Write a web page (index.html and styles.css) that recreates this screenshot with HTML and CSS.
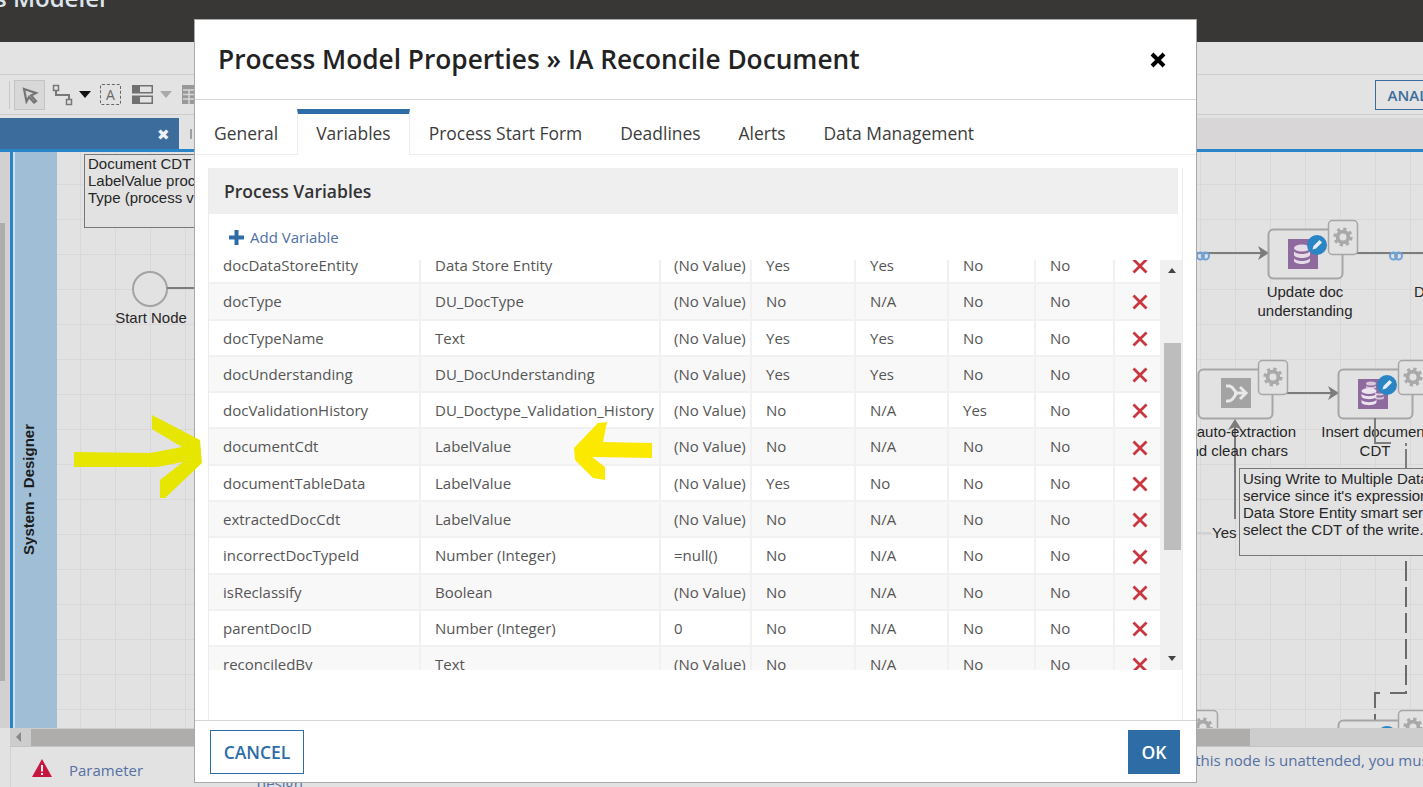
FILE: index.html
```html
<!DOCTYPE html>
<html lang="en">
<head>
    <meta charset="UTF-8">
    <title>Process Modeler</title>
    <link rel="stylesheet" href="styles.css">
</head>
<body>
    <svg class="defs" width="0" height="0">
        <symbol id="gear" viewBox="0 0 24 24">
            <circle cx="12" cy="12" r="6.5" fill="none" stroke="#a9a9a9" stroke-width="4.5"/>
            <circle cx="12" cy="12" r="9.8" fill="none" stroke="#a9a9a9" stroke-width="3.4" stroke-dasharray="3.9 3.8"/>
        </symbol>
        <symbol id="dbicon" viewBox="0 0 30 30">
            <rect width="30" height="30" fill="#8f6a9f"/>
            <ellipse cx="14" cy="9" rx="8" ry="3.5" fill="#e6dce8"/>
            <path d="M6 12c1 4 15 4 16 0v4c-1 4-15 4-16 0z" fill="#e6dce8"/>
            <path d="M6 19c1 4 15 4 16 0v3c-1 4-15 4-16 0z" fill="#e6dce8"/>
        </symbol>
        <symbol id="dbmulti" viewBox="0 0 30 30">
            <rect width="30" height="30" fill="#8f6a9f"/>
            <ellipse cx="13" cy="4.500" rx="5" ry="2" fill="#d8c8dc"/>
            <path d="M8 6.500c1 2 9 2 10 0v2c-1 2-9 2-10 0z" fill="#d8c8dc"/>
            <path d="M17 13c1 2 8 2 9 0v2c-1 2-8 2-9 0zM17 17c1 2 8 2 9 0v2c-1 2-8 2-9 0z" fill="#d8c8dc"/>
            <ellipse cx="11" cy="12" rx="7.500" ry="3" fill="#ece4ee"/>
            <path d="M3.500 14.500c1 3.500 14 3.500 15 0v3c-1 3.500-14 3.500-15 0z" fill="#ece4ee"/>
            <path d="M3.500 20.500c1 3.500 14 3.500 15 0v3c-1 3.500-14 3.500-15 0z" fill="#ece4ee"/>
        </symbol>
        <symbol id="pencil" viewBox="0 0 20 20">
            <circle cx="10" cy="10" r="10" fill="#2a85c4"/>
            <path d="M5.5 14.5l1-3.5 6-6 2.500 2.500-6 6z" fill="#e8eef3"/>
        </symbol>
        <symbol id="chain" viewBox="0 0 14 10">
            <rect x="1" y="1.500" width="7" height="7" rx="3.500" fill="none" stroke="#6fa3d6" stroke-width="2"/>
            <rect x="6" y="1.500" width="7" height="7" rx="3.500" fill="none" stroke="#6fa3d6" stroke-width="2"/>
        </symbol>
        <symbol id="remove" viewBox="0 0 16 16">
            <path d="M1.500 1.500l13 13M14.500 1.500l-13 13" fill="none" stroke="#c9363e" stroke-width="2.800"/>
        </symbol>
    </svg>

    <div class="app">
        <div class="topbar"><span class="apptitle">s Modeler</span></div>
        <div class="band"></div>
        <div class="toolbar">
            <span class="toolsep"></span>
            <span class="toolbtn">
                <svg width="18" height="18" viewBox="0 0 18 18"><path d="M3 3l12 4-5 2.500 5 5.500-2 1.500-5-5.500-2.500 4.500z" fill="#d8d8d8" stroke="#757575" stroke-width="2.200"/></svg>
            </span>
            <svg class="tool-connector" width="22" height="22" viewBox="0 0 22 22"><path d="M4 5v6h13v6" fill="none" stroke="#777" stroke-width="2"/><rect x="1.500" y="1.500" width="5" height="5" fill="#e3e3e3" stroke="#777" stroke-width="1.500"/><rect x="14.500" y="15.500" width="5" height="5" fill="#e3e3e3" stroke="#777" stroke-width="1.500"/></svg>
            <span class="caret dark"></span>
            <span class="tool-text">A</span>
            <svg class="tool-layout" width="21" height="19" viewBox="0 0 21 19"><rect width="21" height="8.500" fill="#707070"/><rect y="10.500" width="21" height="8.500" fill="#707070"/><rect x="8" y="1.500" width="11.500" height="5.500" fill="#e3e3e3"/><rect x="8" y="12" width="11.500" height="5.500" fill="#e3e3e3"/></svg>
            <span class="caret"></span>
            <svg class="tool-table" width="20" height="19" viewBox="0 0 20 19"><rect width="20" height="19" fill="#999"/><path d="M1 5h18M1 9.500h18M1 14h18M7 5v14" stroke="#d8d8d8" stroke-width="1.500"/></svg>
            <span class="toolaction">ANALYTICS</span>
        </div>
        <div class="tabstrip">
            <div class="doctab"><span class="doctab-close">&#10006;</span></div>
            <span class="doctab-next">I</span>
            <div class="tabstrip-fill"></div>
        </div>
        <div class="workspace">
            <div class="gutter"><div class="gutter-thumb"></div></div>
            <div class="lane"><span class="lane-label">System - Designer</span></div>
            <div class="grid">
                <svg class="diagram" width="1366" height="576" viewBox="57 151 1366 576">
                    <rect class="note" x="84.500" y="153.500" width="200" height="73"/>
                    <text class="lbl" x="88" y="169">Document CDT</text>
                    <text class="lbl" x="88" y="186">LabelValue process</text>
                    <text class="lbl" x="88" y="203">Type (process var)</text>

                    <circle class="startnode" cx="150" cy="288" r="17"/>
                    <path class="flow" d="M167 287h40"/>
                    <text class="lbl mid" x="151" y="323">Start Node</text>

                    <path class="flow" d="M1197 252h64M1357 252h66"/>
                    <path class="head" d="M1258 245l11 7-11 7 3-7z"/>
                    <use href="#chain" x="1196" y="250" width="14" height="10"/>
                    <use href="#chain" x="1389" y="250" width="14" height="10"/>
                    <rect class="node" x="1268.500" y="228.500" width="74" height="49" rx="5"/>
                    <use href="#dbicon" x="1288" y="238" width="30" height="30"/>
                    <use href="#pencil" x="1307" y="234" width="20" height="20"/>
                    <rect class="gearbox" x="1328.500" y="219.500" width="29" height="34" rx="4"/>
                    <use href="#gear" x="1333" y="226" width="20" height="20"/>
                    <text class="lbl mid" x="1305" y="297">Update doc</text>
                    <text class="lbl mid" x="1305" y="316">understanding</text>
                    <text class="lbl" x="1414" y="297">D</text>

                    <path class="flow" d="M1287 392h46"/>
                    <path class="head" d="M1328 385l11 7-11 7 3-7z"/>
                    <rect class="node" x="1198.500" y="368.500" width="74" height="49" rx="5"/>
                    <rect x="1221" y="377" width="30" height="30" fill="#a3a3a3"/>
                    <path d="M1226 385h3c4 0 5 5 8 7M1226 400h3c4 0 5-5 8-8M1234 392h11M1240 386l6 6-6 6" fill="none" stroke="#e8e8e8" stroke-width="3"/>
                    <rect class="gearbox" x="1258.500" y="359.500" width="29" height="34" rx="4"/>
                    <use href="#gear" x="1263" y="366" width="20" height="20"/>
                    <rect class="node" x="1338.500" y="368.500" width="74" height="49" rx="5"/>
                    <use href="#dbmulti" x="1358" y="378" width="30" height="30"/>
                    <use href="#pencil" x="1377" y="374" width="20" height="20"/>
                    <rect class="gearbox" x="1398.500" y="359.500" width="29" height="34" rx="4"/>
                    <use href="#gear" x="1403" y="366" width="20" height="20"/>

                    <path class="flow" d="M1235 518v-94"/>
                    <path class="head" d="M1228 429l7-11 7 11-7-3z"/>
                    <text class="lbl end" x="1296" y="437">Run auto-extraction</text>
                    <text class="lbl end" x="1288" y="456">and clean chars</text>
                    <text class="lbl mid" x="1375" y="437">Insert document</text>
                    <text class="lbl mid" x="1375" y="456">CDT</text>

                    <path class="flow thin" d="M1375 417v25h16M1406 445v-3M1406 448v22"/>
                    <path class="dash" d="M1406 560v132h-16M1380 692h-5v27"/>
                    <path class="gridline" d="M1197 532h14"/>
                    <text class="lbl" x="1212" y="538">Yes</text>
                    <rect class="note" x="1239.500" y="467.500" width="200" height="87"/>
                    <text class="lbl" x="1243" y="484">Using Write to Multiple Data Store</text>
                    <text class="lbl" x="1243" y="501">service since it's expression-able.</text>
                    <text class="lbl" x="1243" y="518">Data Store Entity smart service to</text>
                    <text class="lbl" x="1243" y="535">select the CDT of the write.</text>

                    <rect class="gearbox" x="1188.500" y="709.500" width="29" height="34" rx="4"/>
                    <use href="#gear" x="1193" y="716" width="20" height="20"/>
                    <rect class="node" x="1338.500" y="719.500" width="74" height="49" rx="5"/>
                    <circle cx="1387" cy="735" r="10" fill="#2a85c4"/>
                    <rect class="gearbox" x="1398.500" y="709.500" width="29" height="34" rx="4"/>
                    <use href="#gear" x="1403" y="716" width="20" height="20"/>
                </svg>
            </div>
        </div>
        <div class="hscroll">
            <span class="hscroll-btn"></span>
            <div class="hscroll-thumb"></div>
        </div>
        <div class="messages">
            <svg class="warn" width="20" height="18" viewBox="0 0 20 18"><path d="M10 0l10 18H0z" fill="#c8173f"/><path d="M9 6h2v6.500H9zM9 14h2v2H9z" fill="#f3f3f3"/></svg>
            <span class="msg-name">Parameter</span>
            <span class="msg-text">If this node is unattended, you must</span>
            <span class="msg-more">design.</span>
        </div>
    </div>

    <div class="modal">
        <div class="modal-head">
            <h2>Process Model Properties &raquo; IA Reconcile Document</h2>
            <svg class="modal-close" width="16" height="16" viewBox="0 0 16 16"><path d="M2 2l12 12M14 2L2 14" stroke="#000" stroke-width="4"/></svg>
        </div>
        <div class="tabs">
            <span class="tab">General</span>
            <span class="tab active">Variables</span>
            <span class="tab">Process Start Form</span>
            <span class="tab">Deadlines</span>
            <span class="tab">Alerts</span>
            <span class="tab">Data Management</span>
        </div>
        <div class="modal-body">
            <div class="panel">
                <div class="panel-title">Process Variables</div>
                <div class="addvar">
                    <svg width="15" height="15" viewBox="0 0 15 15"><path d="M5.500 0h4v5.500H15v4H9.500V15h-4V9.500H0v-4h5.500z" fill="#2e6ca6"/></svg>
                    <span>Add Variable</span>
                </div>
                <div class="vars">
                    <div class="rows">
                        <div class="row"><span>docDataStoreEntity</span><span>Data Store Entity</span><span>(No Value)</span><span>Yes</span><span>Yes</span><span>No</span><span>No</span><span class="del"><svg><use href="#remove"/></svg></span></div>
                        <div class="row"><span>docType</span><span>DU_DocType</span><span>(No Value)</span><span>No</span><span>N/A</span><span>No</span><span>No</span><span class="del"><svg><use href="#remove"/></svg></span></div>
                        <div class="row"><span>docTypeName</span><span>Text</span><span>(No Value)</span><span>Yes</span><span>Yes</span><span>No</span><span>No</span><span class="del"><svg><use href="#remove"/></svg></span></div>
                        <div class="row"><span>docUnderstanding</span><span>DU_DocUnderstanding</span><span>(No Value)</span><span>Yes</span><span>Yes</span><span>No</span><span>No</span><span class="del"><svg><use href="#remove"/></svg></span></div>
                        <div class="row"><span>docValidationHistory</span><span>DU_Doctype_Validation_History</span><span>(No Value)</span><span>No</span><span>N/A</span><span>Yes</span><span>No</span><span class="del"><svg><use href="#remove"/></svg></span></div>
                        <div class="row"><span>documentCdt</span><span>LabelValue</span><span>(No Value)</span><span>No</span><span>N/A</span><span>No</span><span>No</span><span class="del"><svg><use href="#remove"/></svg></span></div>
                        <div class="row"><span>documentTableData</span><span>LabelValue</span><span>(No Value)</span><span>Yes</span><span>No</span><span>No</span><span>No</span><span class="del"><svg><use href="#remove"/></svg></span></div>
                        <div class="row"><span>extractedDocCdt</span><span>LabelValue</span><span>(No Value)</span><span>No</span><span>N/A</span><span>No</span><span>No</span><span class="del"><svg><use href="#remove"/></svg></span></div>
                        <div class="row"><span>incorrectDocTypeId</span><span>Number (Integer)</span><span>=null()</span><span>No</span><span>N/A</span><span>No</span><span>No</span><span class="del"><svg><use href="#remove"/></svg></span></div>
                        <div class="row"><span>isReclassify</span><span>Boolean</span><span>(No Value)</span><span>No</span><span>N/A</span><span>No</span><span>No</span><span class="del"><svg><use href="#remove"/></svg></span></div>
                        <div class="row"><span>parentDocID</span><span>Number (Integer)</span><span>0</span><span>No</span><span>N/A</span><span>No</span><span>No</span><span class="del"><svg><use href="#remove"/></svg></span></div>
                        <div class="row"><span>reconciledBy</span><span>Text</span><span>(No Value)</span><span>No</span><span>N/A</span><span>No</span><span>No</span><span class="del"><svg><use href="#remove"/></svg></span></div>
                    </div>
                    <div class="vscroll">
                        <span class="arrow-up"></span>
                        <div class="vscroll-thumb"></div>
                        <span class="arrow-down"></span>
                    </div>
                </div>
            </div>
        </div>
        <div class="modal-foot">
            <button class="btn-cancel">CANCEL</button>
            <button class="btn-ok">OK</button>
        </div>
    </div>

    <svg class="scribble" width="1423" height="787" viewBox="0 0 1423 787">
        <path d="M74 452L150 453 182 447 152 429V415L200 440 202 463 165 498H160V480L183 462 157 467H74z" fill="#e6e600"/>
        <path d="M607 422L603 442 652 443V458L592 457 605 467V480L593 478 575 460 574 448 598 423z" fill="#fbe900"/>
    </svg>
</body>
</html>
```

FILE: styles.css
```css
html, body {
    margin: 0;
    height: 100%;
    overflow: hidden;
}

body {
    position: relative;
    font-family: "Open Sans", sans-serif;
    background: #e2e2e2;
}

.defs {
    position: absolute;
}

.app {
    display: flex;
    flex-direction: column;
    height: 787px;
    overflow: hidden;
}

/* top of the modeler */
.topbar {
    height: 42px;
    flex: none;
    background: #383735;
    overflow: hidden;
}

.apptitle {
    display: block;
    margin: -20px 0 0 -5px;
    font-size: 24px;
    line-height: 36px;
    font-weight: 600;
    color: #dce4ec;
}

.band {
    height: 32px;
    flex: none;
    background: #e3e3e3;
    border-bottom: 1px solid #cdcdcd;
}

.toolbar {
    height: 39px;
    flex: none;
    display: flex;
    align-items: center;
    border-bottom: 1px solid #cdcdcd;
    background: #e3e3e3;
}

.toolsep {
    width: 1px;
    height: 28px;
    margin-left: 9px;
    background: #c8c8c8;
}

.toolbtn {
    width: 29px;
    height: 28px;
    margin-left: 4px;
    display: flex;
    align-items: center;
    justify-content: center;
    background: #d8d8d8;
    border: 1px solid #c4c4c4;
}

.tool-connector {
    margin-left: 7px;
}

.caret {
    width: 0;
    height: 0;
    margin-left: 7px;
    border-left: 6px solid transparent;
    border-right: 6px solid transparent;
    border-top: 7px solid #aaa;
}

.caret.dark {
    margin-left: 5px;
    border-top-color: #111;
}

.tool-text {
    width: 19px;
    height: 19px;
    margin-left: 9px;
    border: 1px dashed #666;
    border-radius: 2px;
    text-align: center;
    font-size: 14px;
    line-height: 19px;
    color: #666;
}

.tool-layout {
    margin-left: 11px;
}

.tool-table {
    margin-left: 10px;
}

.toolaction {
    margin-left: auto;
    margin-right: -57px;
    padding: 0 12px;
    height: 28px;
    border: 1px solid #3b6c9b;
    font-size: 15px;
    font-weight: 600;
    line-height: 28px;
    color: #3b6c9b;
}

.tabstrip {
    height: 31px;
    margin-top: 3px;
    flex: none;
    display: flex;
    align-items: center;
}

.doctab {
    width: 179px;
    height: 31px;
    flex: none;
    display: flex;
    align-items: center;
    justify-content: flex-end;
    background: #3b6c9b;
}

.doctab-close {
    margin-right: 9px;
    font-size: 15px;
    color: #eef2f6;
}

.doctab-next {
    width: 1018px;
    flex: none;
    box-sizing: border-box;
    padding-left: 10px;
    font-size: 14px;
    color: #777;
}

.tabstrip-fill {
    flex: 1;
    height: 31px;
    background: #d8d6d6;
}

/* process canvas */
.workspace {
    height: 576px;
    flex: none;
    display: flex;
    border-top: 3px solid #2a85c8;
}

.gutter {
    width: 10px;
    flex: none;
    background: #d2d0d0;
}

.gutter-thumb {
    width: 5px;
    height: 458px;
    margin-top: 71px;
    background: #afadab;
}

.lane {
    width: 44px;
    flex: none;
    display: flex;
    align-items: center;
    justify-content: center;
    background: #a0bfd6;
    border-left: 3px solid #2a85c8;
    box-shadow: inset 2px 0 0 #cfe0ec;
}

.lane-label {
    writing-mode: vertical-rl;
    transform: rotate(180deg);
    font-family: "Liberation Sans", sans-serif;
    font-size: 15px;
    font-weight: 700;
    color: #1c1c1c;
    margin-top: 98px;
    margin-left: -14px;
}

.grid {
    position: relative;
    flex: 1;
    overflow: hidden;
    background-color: #e2e2e2;
    background-image:
        linear-gradient(to right, #d8d8d8 1px, transparent 1px),
        linear-gradient(to bottom, #d8d8d8 1px, transparent 1px);
    background-size: 35px 35px;
    background-position: 23px 32px;
}

.diagram {
    display: block;
}

.lbl {
    font-family: "Liberation Sans", sans-serif;
    font-size: 15px;
    fill: #262626;
    transform: translateY(-1px);
}

.mid {
    text-anchor: middle;
}

.end {
    text-anchor: end;
}

.note {
    fill: #e2e2e2;
    stroke: #777;
}

.startnode {
    fill: #e2e2e2;
    stroke: #a3a3a3;
    stroke-width: 2;
}

.node {
    fill: #e2e2e2;
    stroke: #a6a6a6;
    stroke-width: 2;
}

.gearbox {
    fill: #e2e2e2;
    stroke: #a6a6a6;
    stroke-width: 1.500;
}

.flow {
    fill: none;
    stroke: #7c7c7c;
    stroke-width: 2;
}

.dash {
    fill: none;
    stroke: #6a6a6a;
    stroke-width: 2;
    stroke-dasharray: 20 6;
}

.gridline {
    stroke: #d0d0d0;
    stroke-width: 2;
}

.head {
    fill: #7c7c7c;
}

.hscroll {
    height: 18px;
    margin-left: 10px;
    flex: none;
    display: flex;
    align-items: center;
    background: #cdcdcd;
    border-bottom: 1px solid #c4c4c4;
}

.hscroll-btn {
    width: 0;
    height: 0;
    margin-left: 6px;
    margin-right: 10px;
    border-top: 5px solid transparent;
    border-bottom: 5px solid transparent;
    border-right: 5px solid #888;
}

.hscroll-thumb {
    width: 1219px;
    height: 17px;
    background: #afadab;
}

.messages {
    position: relative;
    flex: 1;
    margin-left: 10px;
    border-left: 1px solid #d2d2d2;
    background: #e2e2e2;
}

.warn {
    position: absolute;
    left: 21px;
    top: 12px;
}

.msg-name {
    position: absolute;
    left: 58px;
    top: 13px;
    font-size: 15px;
    color: #5470a4;
}

.msg-text {
    position: absolute;
    left: 1171px;
    top: 3px;
    white-space: nowrap;
    font-size: 15px;
    color: #5470a4;
}

.msg-more {
    position: absolute;
    left: 246px;
    top: 26px;
    font-size: 15px;
    color: #5470a4;
}

/* dialog */
.modal {
    position: absolute;
    left: 194px;
    top: 19px;
    width: 1001px;
    height: 762px;
    display: flex;
    flex-direction: column;
    background: #fff;
    border: 1px solid #a9a9a9;
}

.modal-head {
    height: 79px;
    flex: none;
    display: flex;
    align-items: center;
    justify-content: space-between;
    padding: 0 30px 0 23px;
    border-bottom: 1px solid #d6d6d6;
}

.modal-head h2 {
    margin: -2px 0 0;
    font-size: 26.250px;
    font-weight: 600;
    color: #222;
}

.tabs {
    height: 54px;
    flex: none;
    display: flex;
    align-items: flex-end;
    border-bottom: 1px solid #ececec;
}

.tab {
    height: 45px;
    padding: 0 19px;
    box-sizing: border-box;
    font-size: 17.450px;
    line-height: 49px;
    color: #3c3c3c;
}

.tab.active {
    height: 46px;
    margin-bottom: -1px;
    line-height: 38px;
    background: #fff;
    border-top: 5px solid #2e6ca6;
    border-left: 1px solid #ececec;
    border-right: 1px solid #ececec;
    padding: 0 18px;
}

.modal-body {
    flex: 1;
    padding: 13px 13px 0 14px;
    min-height: 0;
}

.panel {
    height: 100%;
    box-sizing: border-box;
    box-shadow: -1px 0 0 #ececec;
    border-right: 1px solid #ececec;
}

.panel-title {
    height: 46px;
    margin-right: 4px;
    padding-left: 15px;
    background: #efefef;
    font-size: 17.500px;
    font-weight: 600;
    line-height: 46px;
    color: #333;
}

.addvar {
    height: 46px;
    display: flex;
    align-items: center;
    gap: 6px;
    padding-left: 20px;
    font-size: 15px;
    color: #4f70a3;
}

.vars {
    display: flex;
    height: 410px;
}

.rows {
    width: 951px;
    flex: none;
    overflow: hidden;
}

.row {
    display: grid;
    grid-template-columns: 212px 240px 91px 104px 93px 87px 79px 45px;
    height: 36.300px;
    box-sizing: border-box;
    border-bottom: 2px solid #f1f1f1;
    font-size: 15px;
    line-height: 35px;
    color: #555;
}

.row:first-child {
    margin-top: -12px;
}

.row:nth-child(even) {
    background: #f8f8f8;
}

.row span {
    padding-left: 14px;
    border-right: 2px solid #f1f1f1;
    white-space: nowrap;
    overflow: hidden;
}

.row span:nth-child(3) {
    padding-left: 13px;
}

.row .del {
    padding: 2px 0 0 5px;
    border-right: 0;
    display: flex;
    align-items: center;
    justify-content: center;
}

.del svg {
    width: 16px;
    height: 16px;
}

.vscroll {
    position: relative;
    flex: 1;
    background: #f0f0f0;
}

.vscroll-thumb {
    position: absolute;
    left: 4px;
    top: 83px;
    width: 17px;
    height: 207px;
    background: #bdbdbd;
}

.arrow-up,
.arrow-down {
    position: absolute;
    left: 8px;
    width: 0;
    height: 0;
    border-left: 4.500px solid transparent;
    border-right: 4.500px solid transparent;
}

.arrow-up {
    top: 8px;
    border-bottom: 5px solid #444;
}

.arrow-down {
    bottom: 9px;
    border-top: 5px solid #444;
}

.modal-foot {
    height: 62px;
    flex: none;
    display: flex;
    align-items: flex-start;
    justify-content: space-between;
    padding: 9px 16px 0 15px;
    border-top: 1px solid #d6d6d6;
    box-sizing: border-box;
}

.btn-cancel,
.btn-ok {
    height: 44px;
    font-family: "Open Sans", sans-serif;
    font-size: 17.500px;
    font-weight: 600;
}

.btn-cancel {
    width: 94px;
    background: #fff;
    border: 1px solid #2e6ca6;
    color: #2e6ca6;
}

.btn-ok {
    width: 52px;
    background: #2e6ca6;
    border: 0;
    color: #fff;
}

.scribble {
    position: absolute;
    left: 0;
    top: 0;
    pointer-events: none;
}
```
